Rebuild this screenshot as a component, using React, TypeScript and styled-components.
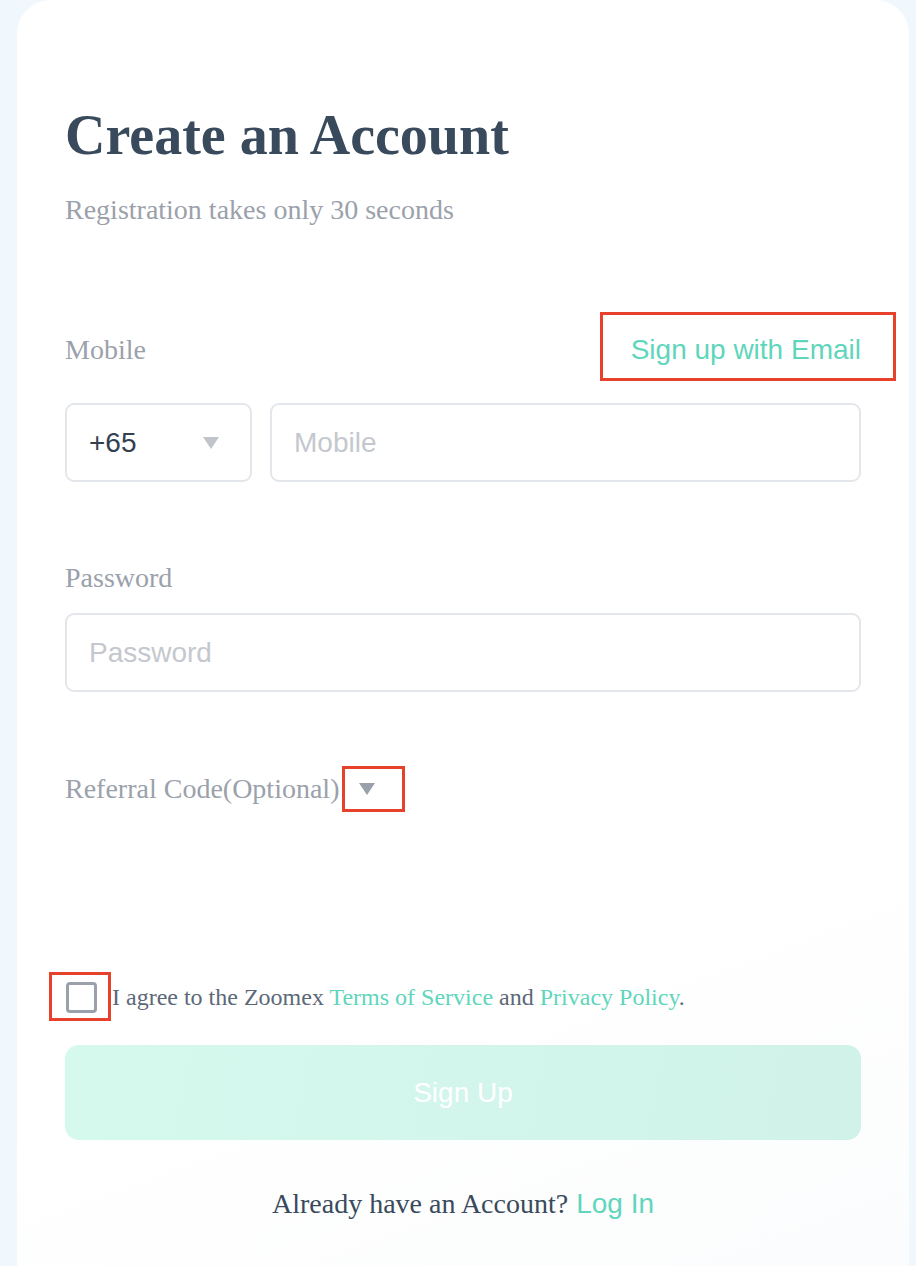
import React from 'react';
import styled, { createGlobalStyle } from 'styled-components';

const GlobalStyle = createGlobalStyle`
  html, body {
    margin: 0;
    padding: 0;
    background: #f1f8fd;
  }
  * { box-sizing: border-box; }
`;

const Page = styled.div`
  width: 916px;
  height: 1266px;
  overflow: hidden;
  padding: 0 7px 0 17px;
`;

const Card = styled.div`
  background: linear-gradient(160deg, #ffffff 70%, #fbfcfd 100%);
  border-radius: 34px 34px 0 0;
  height: 1300px;
  padding: 100px 48px 0 48px;
  font-family: 'Liberation Serif', 'Times New Roman', serif;
`;

const Title = styled.h1`
  margin: 0;
  font-size: 56px;
  font-weight: 700;
  color: #394a5c;
  line-height: 70px;
`;

const Subtitle = styled.p`
  margin: 20px 0 0;
  font-size: 28px;
  color: #9aa1ab;
  line-height: 40px;
`;

const LabelRow = styled.div<{ $top: number }>`
  display: flex;
  align-items: center;
  justify-content: space-between;
  margin-top: ${p => p.$top}px;
  height: 40px;
`;

const Label = styled.span`
  font-size: 28px;
  color: #9aa1ab;
  display: inline-flex;
  align-items: center;
`;

// red annotation frame drawn over an element
const Annotated = styled.span<{ $l: number; $r: number; $t: number; $b: number; $gap?: number }>`
  position: relative;
  display: inline-flex;
  align-items: center;
  margin-left: ${p => p.$gap ?? 0}px;
  &::after {
    content: '';
    position: absolute;
    left: ${p => -p.$l}px;
    right: ${p => -p.$r}px;
    top: ${p => -p.$t}px;
    bottom: ${p => -p.$b}px;
    border: 3px solid #e8412b;
    pointer-events: none;
  }
`;

const EmailLink = styled.a`
  font-family: 'Liberation Sans', Arial, sans-serif;
  font-size: 28px;
  color: #5fd6bb;
  text-decoration: none;
  line-height: 40px;
`;

const InputRow = styled.div<{ $top: number }>`
  display: flex;
  gap: 18px;
  margin-top: ${p => p.$top}px;
`;

const Field = styled.div<{ $width?: number }>`
  flex: ${p => (p.$width ? `0 0 ${p.$width}px` : '1')};
  height: 79px;
  border: 2px solid #e3e7eb;
  border-radius: 9px;
  display: flex;
  align-items: center;
  justify-content: space-between;
  padding: 0 31px 0 22px;
  font-family: 'Liberation Sans', Arial, sans-serif;
  font-size: 28px;
`;

const Value = styled.span`
  color: #33404f;
`;

const Placeholder = styled.span`
  color: #c4c8ce;
`;

const Caret = styled.span<{ $color: string }>`
  width: 0;
  height: 0;
  border-left: 8px solid transparent;
  border-right: 8px solid transparent;
  border-top: 12px solid ${p => p.$color};
`;

const AgreeRow = styled.div`
  display: flex;
  align-items: center;
  margin-top: 173px;
  gap: 15px;
  font-size: 24px;
  color: #5c6878;
  padding-left: 1px;
`;

const Checkbox = styled.span`
  width: 31px;
  height: 31px;
  border: 3px solid #9aa1ab;
  border-radius: 4px;
  flex: none;
`;

const GreenText = styled.a`
  color: #5fd6bb;
  text-decoration: none;
`;

const SignUpButton = styled.button`
  margin-top: 32px;
  width: 100%;
  height: 95px;
  border: none;
  border-radius: 14px;
  background: linear-gradient(100deg, #d6f9ee 0%, #d0f2e9 100%);
  color: #ffffff;
  font-family: 'Liberation Sans', Arial, sans-serif;
  font-size: 28px;
`;

const LoginRow = styled.div`
  margin-top: 44px;
  text-align: center;
  font-size: 28px;
  color: #394a5c;
  line-height: 40px;
`;

const LoginLink = styled.a`
  font-family: 'Liberation Sans', Arial, sans-serif;
  color: #5fd6bb;
  text-decoration: none;
  margin-left: 8px;
`;

export default function App() {
  return (
    <>
      <GlobalStyle />
      <Page>
        <Card>
          <Title>Create an Account</Title>
          <Subtitle>Registration takes only 30 seconds</Subtitle>

          <LabelRow $top={100}>
            <Label>Mobile</Label>
            <Annotated $l={31} $r={35} $t={18} $b={11}>
              <EmailLink href="#">Sign up with Email</EmailLink>
            </Annotated>
          </LabelRow>
          <InputRow $top={33}>
            <Field $width={187}>
              <Value>+65</Value>
              <Caret $color="#c0c4cb" />
            </Field>
            <Field>
              <Placeholder>Mobile</Placeholder>
            </Field>
          </InputRow>

          <LabelRow $top={76}>
            <Label>Password</Label>
          </LabelRow>
          <InputRow $top={15}>
            <Field>
              <Placeholder>Password</Placeholder>
            </Field>
          </InputRow>

          <LabelRow $top={77}>
            <Label>
              Referral Code(Optional)
              <Annotated $gap={20} $l={17} $r={30} $t={17} $b={17}>
                <Caret $color="#9aa1ab" />
              </Annotated>
            </Label>
          </LabelRow>

          <AgreeRow>
            <Annotated $l={17} $r={14} $t={10} $b={8}>
              <Checkbox />
            </Annotated>
            <span>
              I agree to the Zoomex <GreenText href="#">Terms of Service</GreenText> and{' '}
              <GreenText href="#">Privacy Policy</GreenText>.
            </span>
          </AgreeRow>

          <SignUpButton>Sign Up</SignUpButton>

          <LoginRow>
            Already have an Account?
            <LoginLink href="#">Log In</LoginLink>
          </LoginRow>
        </Card>
      </Page>
    </>
  );
}
